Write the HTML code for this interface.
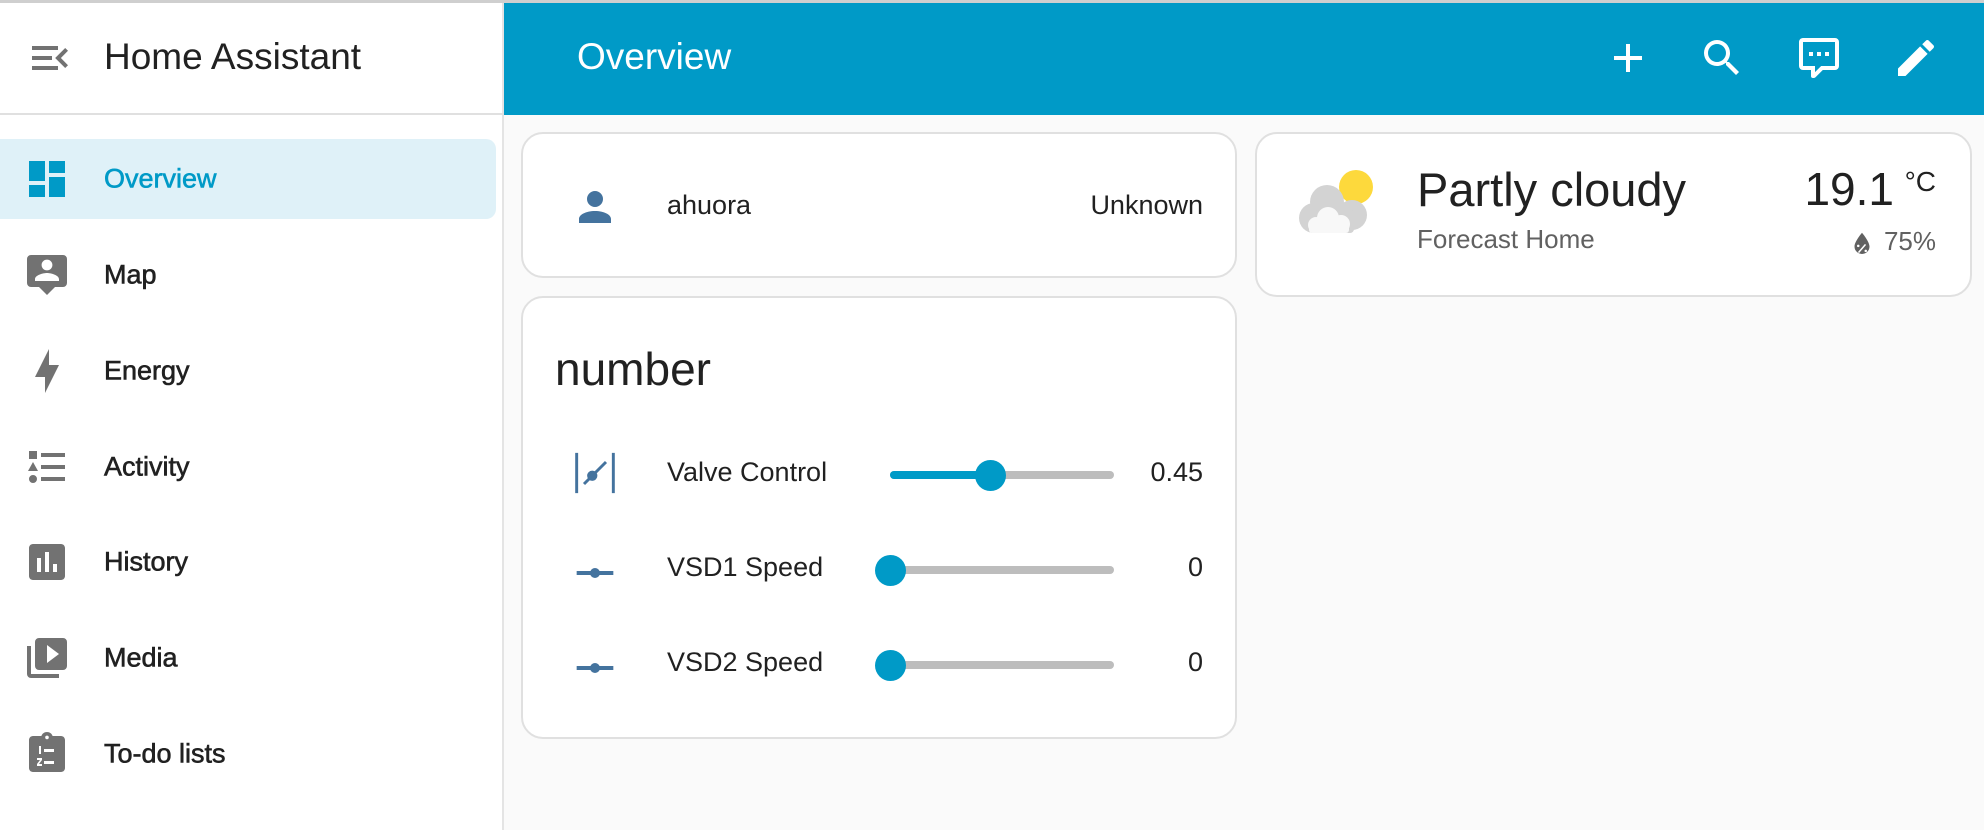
<!DOCTYPE html>
<html><head><meta charset="utf-8"><style>
*{box-sizing:border-box;margin:0;padding:0}
body{width:1984px;height:830px;overflow:hidden;font-family:"Liberation Sans",Roboto,sans-serif;background:#fafafa;position:relative;color:#212121}
.topline{position:absolute;left:0;top:0;width:1984px;height:3px;background:#cfcfcf;z-index:5}
.side{position:absolute;left:0;top:0;width:504px;height:830px;background:#fff;border-right:2px solid #e4e4e4}
.shead{position:absolute;left:0;top:0;width:504px;height:115px;border-bottom:2px solid #e0e0e0}
.abs{position:absolute}
.item{position:absolute;left:0;width:496px;height:80px}
.item span{position:absolute;left:104px;top:50%;transform:translateY(-50%);font-size:27px;font-weight:normal;-webkit-text-stroke:0.6px currentColor;color:#212121}
.item svg{position:absolute;left:23px;top:16px;width:48px;height:48px;fill:#727272}
.head{position:absolute;left:504px;top:0;width:1480px;height:115px;background:#009ac7}
.hicon{position:absolute;top:34px;width:48px;height:48px;fill:#fff}
.card{position:absolute;background:#fff;border:2px solid #e0e0e0;border-radius:22px}
.t{position:absolute;white-space:nowrap}
.track{position:absolute;height:8px;background:#bdbdbd;border-radius:4px}
.fill{position:absolute;height:8px;background:#009ac7;border-radius:4px}
.thumb{position:absolute;width:31px;height:31px;border-radius:50%;background:#009ac7}
</style></head><body>
<div class="topline"></div>
<div class="side">
 <div class="shead">
  <svg class="abs" style="left:26px;top:34px;width:48px;height:48px;fill:#727272" viewBox="0 0 24 24"><path d="M21,15.61L19.59,17L14.58,12L19.59,7L21,8.39L17.44,12L21,15.61M3,6H16V8H3V6M3,13V11H13V13H3M3,18V16H16V18H3Z"/></svg>
  <div class="t" style="left:104px;top:36px;font-size:37px;color:#212121">Home Assistant</div>
 </div>
 <div class="item" style="top:139px;background:#dff1f8;border-radius:0 10px 10px 0">
  <svg viewBox="0 0 24 24" style="fill:#009ac7"><path d="M13,3V9H21V3M13,21H21V11H13M3,21H11V15H3M3,13H11V3H3V13Z"/></svg>
  <span style="color:#009ac7">Overview</span></div>
 <div class="item" style="top:235px">
  <svg viewBox="0 0 24 24"><path d="M20 2H4a2 2 0 0 0-2 2v12a2 2 0 0 0 2 2h4l4 4 4-4h4a2 2 0 0 0 2-2V4a2 2 0 0 0-2-2m-8 2.3c1.5 0 2.7 1.2 2.7 2.7S13.5 9.7 12 9.7 9.3 8.5 9.3 7s1.2-2.7 2.7-2.7M18 15H6v-.9c0-2 4-3.1 6-3.1s6 1.1 6 3.1z"/></svg>
  <span>Map</span></div>
 <div class="item" style="top:331px">
  <svg viewBox="0 0 24 24"><path d="M11 15H6L13 1V9H18L11 23V15Z"/></svg>
  <span>Energy</span></div>
 <div class="item" style="top:427px">
  <svg viewBox="0 0 24 24"><path d="M5,9.5L7.5,14H2.5L5,9.5M3,4H7V8H3V4M5,20A2,2 0 0,0 7,18A2,2 0 0,0 5,16A2,2 0 0,0 3,18A2,2 0 0,0 5,20M9,5V7H21V5H9M9,19H21V17H9V19M9,13H21V11H9V13Z"/></svg>
  <span>Activity</span></div>
 <div class="item" style="top:522px">
  <svg viewBox="0 0 24 24"><path fill-rule="evenodd" d="M19 3H5C3.9 3 3 3.9 3 5V19C3 20.1 3.9 21 5 21H19C20.1 21 21 20.1 21 19V5C21 3.9 20.1 3 19 3ZM9 17H7V10H9V17M13 17H11V7H13V17M17 17H15V13H17V17Z"/></svg>
  <span>History</span></div>
 <div class="item" style="top:618px">
  <svg viewBox="0 0 24 24"><path d="M4,6H2V20A2,2 0 0,0 4,22H18V20H4V6M20,2H8A2,2 0 0,0 6,4V16A2,2 0 0,0 8,18H20A2,2 0 0,0 22,16V4A2,2 0 0,0 20,2M12,14.5V5.5L18,10L12,14.5Z"/></svg>
  <span>Media</span></div>
 <div class="item" style="top:714px">
  <svg viewBox="0 0 24 24"><path fill-rule="evenodd" d="M19 3h-4.2C14.4 1.8 13.3 1 12 1s-2.4.8-2.8 2H5c-1.1 0-2 .9-2 2v14c0 1.1.9 2 2 2h14c1.1 0 2-.9 2-2V5c0-1.1-.9-2-2-2zM12 2.8a.9.9 0 1 1 0 1.8.9.9 0 0 1 0-1.8zM8 8h1v4H8zM10.5 9.5h5v1.5h-5zM7 14h2.5v1l-1.5 2h1.5v1H7v-1l1.5-2H7zM10.5 15.5h5V17h-5z"/></svg>
  <span>To-do lists</span></div>
</div>
<div class="head">
 <div class="t" style="left:73px;top:36px;font-size:37px;color:#fff">Overview</div>
 <svg class="hicon" style="left:1100px" viewBox="0 0 24 24"><path d="M19,13H13V19H11V13H5V11H11V5H13V11H19V13Z"/></svg>
 <svg class="hicon" style="left:1194px" viewBox="0 0 24 24"><path d="M9.5,3A6.5,6.5 0 0,1 16,9.5C16,11.11 15.41,12.590 14.44,13.73L14.71,14H15.5L20.5,19L19,20.5L14,15.5V14.71L13.73,14.44C12.59,15.41 11.11,16 9.5,16A6.5,6.5 0 0,1 3,9.5A6.5,6.5 0 0,1 9.5,3M9.5,5C7,5 5,7 5,9.5C5,12 7,14 9.5,14C12,14 14,12 14,9.5C14,7 12,5 9.5,5Z"/></svg>
 <svg class="hicon" style="left:1291px" viewBox="0 0 24 24"><path d="M9,22A1,1 0 0,1 8,21V18H4A2,2 0 0,1 2,16V4C2,2.89 2.9,2 4,2H20A2,2 0 0,1 22,4V16A2,2 0 0,1 20,18H13.9L10.2,21.71C10,21.9 9.75,22 9.5,22V22H9M10,16V19.080L13.08,16H20V4H4V16H10M17,11H15V9H17V11M13,11H11V9H13V11M9,11H7V9H9V11Z"/></svg>
 <svg class="hicon" style="left:1388px" viewBox="0 0 24 24"><path d="M20.71,7.04C21.1,6.65 21.1,6 20.71,5.63L18.37,3.29C18,2.9 17.35,2.9 16.96,3.29L15.12,5.12L18.87,8.87M3,17.25V21H6.75L17.81,9.93L14.06,6.18L3,17.25Z"/></svg>
</div>

<div class="card" style="left:521px;top:132px;width:716px;height:146px">
 <svg class="abs" style="left:48px;top:49px;width:48px;height:48px;fill:#44739e" viewBox="0 0 24 24"><path d="M12,4A4,4 0 0,1 16,8A4,4 0 0,1 12,12A4,4 0 0,1 8,8A4,4 0 0,1 12,4M12,14C16.42,14 20,15.79 20,18V20H4V18C4,15.79 7.58,14 12,14Z"/></svg>
 <div class="t" style="left:144px;top:56px;font-size:27px">ahuora</div>
 <div class="t" style="right:32px;top:56px;font-size:27px">Unknown</div>
</div>

<div class="card" style="left:521px;top:296px;width:716px;height:443px">
 <div class="t" style="left:32px;top:44px;font-size:46px">number</div>
 <svg class="abs" style="left:50px;top:153px;width:44px;height:44px" viewBox="0 0 24 24" stroke="#44739e" stroke-width="1.6" fill="none"><path d="M2 1V23M22 1V23M6 18L18 6"/><circle cx="10.5" cy="13.5" r="2" fill="#44739e"/></svg>
 <div class="t" style="left:144px;top:159px;font-size:27px">Valve Control</div>
 <div class="track" style="left:367px;top:173px;width:224px"></div>
 <div class="fill" style="left:367px;top:173px;width:100px"></div>
 <div class="thumb" style="left:452px;top:162px"></div>
 <div class="t" style="right:32px;top:159px;font-size:27px">0.45</div>

 <svg class="abs" style="left:52px;top:255px;width:40px;height:40px" viewBox="0 0 24 24"><path d="M1 10.8H23V13.2H1Z" fill="#44739e"/><circle cx="12" cy="12" r="3" fill="#44739e"/></svg>
 <div class="t" style="left:144px;top:254px;font-size:27px">VSD1 Speed</div>
 <div class="track" style="left:367px;top:268px;width:224px"></div>
 <div class="thumb" style="left:352px;top:257px"></div>
 <div class="t" style="right:32px;top:254px;font-size:27px">0</div>

 <svg class="abs" style="left:52px;top:350px;width:40px;height:40px" viewBox="0 0 24 24"><path d="M1 10.8H23V13.2H1Z" fill="#44739e"/><circle cx="12" cy="12" r="3" fill="#44739e"/></svg>
 <div class="t" style="left:144px;top:349px;font-size:27px">VSD2 Speed</div>
 <div class="track" style="left:367px;top:363px;width:224px"></div>
 <div class="thumb" style="left:352px;top:352px"></div>
 <div class="t" style="right:32px;top:349px;font-size:27px">0</div>
</div>

<div class="card" style="left:1255px;top:132px;width:717px;height:165px">
 <svg class="abs" style="left:40px;top:36px;width:80px;height:70px" viewBox="0 0 80 70">
  <circle cx="59" cy="17" r="17" fill="#fdd93c"/>
  <g fill="#d3d3d3"><circle cx="30" cy="32" r="17"/><circle cx="55" cy="45" r="15"/><circle cx="17" cy="48" r="15"/><rect x="17" y="40" width="40" height="23" rx="4"/></g>
  <g fill="#f8f8f8"><circle cx="31" cy="48" r="11"/><circle cx="44" cy="54" r="9"/><circle cx="19" cy="55" r="8"/><rect x="12" y="52" width="40" height="11" rx="3"/></g>
 </svg>
 <div class="t" style="left:160px;top:28px;font-size:47px;color:#212121">Partly cloudy</div>
 <div class="t" style="left:160px;top:90px;font-size:26px;color:#616161">Forecast Home</div>
 <div class="t" style="right:76px;top:28px;font-size:46px">19.1</div>
 <div class="t" style="right:34px;top:32px;font-size:28px">°C</div>
 <svg class="abs" style="left:590px;top:95px;width:30px;height:30px;fill:#616161" viewBox="0 0 24 24"><path fill-rule="evenodd" d="M12 3s-6 7-6 11a6 6 0 0 0 12 0c0-4-6-11-6-11zM9 12.5a1 1 0 1 1 0 2 1 1 0 0 1 0-2zM15 16.5a1 1 0 1 1 0 2 1 1 0 0 1 0-2zM14.3 12l1 .7-5.6 6.5-1-.7z"/></svg>
 <div class="t" style="right:34px;top:92px;font-size:26px;color:#616161">75%</div>
</div>
</body></html>
